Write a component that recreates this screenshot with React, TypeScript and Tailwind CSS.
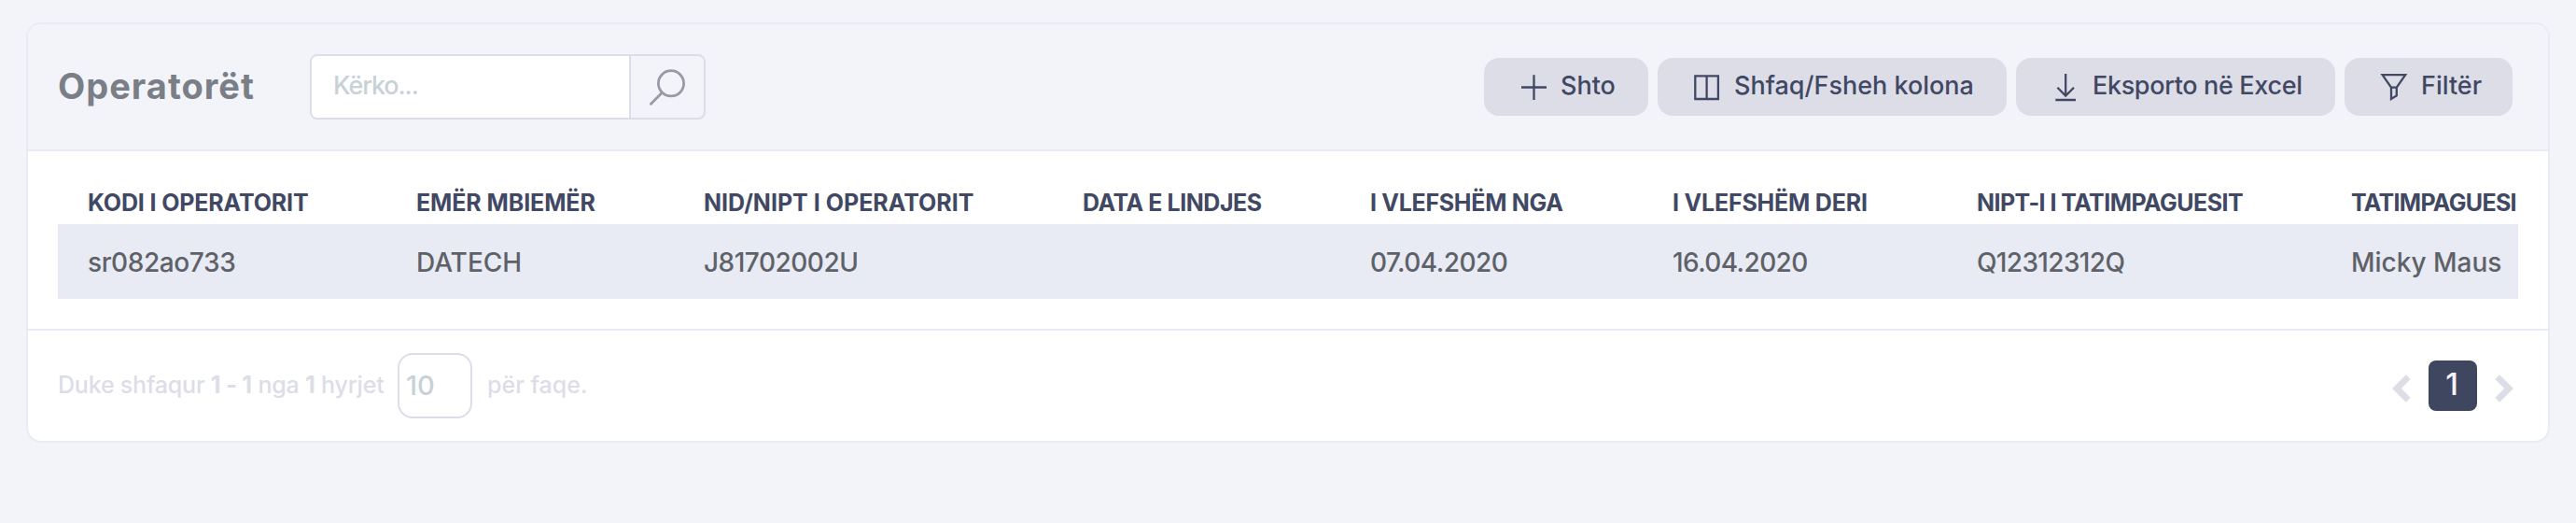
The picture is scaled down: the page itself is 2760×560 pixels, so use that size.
import type { ReactNode } from "react";

interface Column {
  title: string;
  value: string;
  width: string;
  titleTracking?: string;
  valueTracking?: string;
}

const columns: Column[] = [
  { title: "KODI I OPERATORIT", value: "sr082ao733", width: "w-[352px]", titleTracking: "tracking-[-0.15px]", valueTracking: "tracking-[-0.4px]" },
  { title: "EMËR MBIEMËR", value: "DATECH", width: "w-[308px]", titleTracking: "tracking-[-0.1px]" },
  { title: "NID/NIPT I OPERATORIT", value: "J81702002U", width: "w-[406px]", valueTracking: "tracking-[-0.5px]" },
  { title: "DATA E LINDJES", value: "", width: "w-[308px]", titleTracking: "tracking-[-0.45px]" },
  { title: "I VLEFSHËM NGA", value: "07.04.2020", width: "w-[324px]", titleTracking: "tracking-[-0.3px]", valueTracking: "tracking-[-0.5px]" },
  { title: "I VLEFSHËM DERI", value: "16.04.2020", width: "w-[326px]", titleTracking: "tracking-[-0.2px]", valueTracking: "tracking-[-0.6px]" },
  { title: "NIPT-I I TATIMPAGUESIT", value: "Q12312312Q", width: "w-[401px]", titleTracking: "tracking-[-0.55px]", valueTracking: "tracking-[-0.65px]" },
  { title: "TATIMPAGUESI", value: "Micky Maus", width: "w-[211px]", titleTracking: "tracking-[-0.7px]" },
];

function SearchIcon() {
  return (
    <svg width="40" height="40" viewBox="0 0 40 40" fill="none" stroke="#9a9aa6" strokeWidth="2.8" strokeLinecap="round">
      <circle cx="24" cy="16.3" r="13.6" />
      <path d="M14.3 26.2L2.4 38.2" />
    </svg>
  );
}

function ActionIcon({ children }: { children: ReactNode }) {
  return (
    <svg width="32" height="32" viewBox="0 0 32 32" fill="none" stroke="#414863" strokeWidth="2.3" className="shrink-0">
      {children}
    </svg>
  );
}

function ActionButton({ label, className, children }: { label: string; className: string; children: ReactNode }) {
  return (
    <button className={`flex h-[62px] items-center gap-[13px] rounded-[16px] bg-[#dddde7] pl-[37px] text-[27px] font-medium whitespace-nowrap text-[#414863] ${className}`}>
      <ActionIcon>{children}</ActionIcon>
      <span className="-mt-px">{label}</span>
    </button>
  );
}

function Header() {
  return (
    <div className="flex h-[136px] items-center rounded-t-[14px] border-b-2 border-[#e8eaf4] bg-[#f3f4f9] pr-[38px] pl-8">
      <h1 className="-mt-0.5 w-[270px] text-[38px] font-bold tracking-[1px] text-[#7a7f87]">Operatorët</h1>

      <div className="flex h-[70px] w-[424px] overflow-hidden rounded-lg border-2 border-[#dddde7]">
        <input
          type="text"
          placeholder="Kërko..."
          className="w-[340px] bg-white pb-0.5 pl-[23px] text-[27px] font-medium tracking-[-1.1px] outline-none placeholder:text-[#c7d2d6]"
        />
        <button className="flex flex-1 items-center justify-center border-l-2 border-[#dddde7]">
          <SearchIcon />
        </button>
      </div>

      <div className="ml-auto flex gap-2.5">
        <ActionButton label="Shto" className="w-[176px]">
          <path d="M3 16.5H30M16.5 3.3V30" />
        </ActionButton>
        <ActionButton label="Shfaq/Fsheh kolona" className="w-[374px]">
          <path d="M3.3 4.3H27.9V29H3.3ZM15.6 4.3V29" />
        </ActionButton>
        <ActionButton label="Eksporto në Excel" className="w-[342px] tracking-[-0.35px]">
          <path d="M16.2 2V25M7.4 16.7L16.2 25.5L25 16.7M5.3 30H27" />
        </ActionButton>
        <ActionButton label="Filtër" className="w-[180px]">
          <path d="M3.6 3.2H28.2L18.8 16.6H13L3.6 3.2ZM13 16.6V29L18.8 25.4V16.6" />
        </ActionButton>
      </div>
    </div>
  );
}

function OperatorsTable() {
  return (
    <div className="overflow-hidden px-8 py-8">
      <table className="w-[2636px] table-fixed border-collapse text-left whitespace-nowrap">
        <thead>
          <tr className="h-[46px]">
            {columns.map((col) => (
              <th key={col.title} className={`py-0 pr-0 pl-8 align-middle text-[25px] leading-[46px] font-bold text-[#414863] ${col.width} ${col.titleTracking ?? ""}`}>
                {col.title}
              </th>
            ))}
          </tr>
        </thead>
        <tbody>
          <tr className="h-20 bg-[#e8ebf4]">
            {columns.map((col) => (
              <td key={col.title} className={`pt-0.5 pr-0 pb-0 pl-8 align-middle text-[28px] font-medium text-[#5e6268] ${col.valueTracking ?? ""}`}>
                {col.value}
              </td>
            ))}
          </tr>
        </tbody>
      </table>
    </div>
  );
}

function Footer() {
  return (
    <div className="flex h-[120px] items-center justify-between border-t-2 border-[#e8eaf4] pr-[37px] pl-8">
      <div className="flex items-center text-[25px] font-medium text-[#dddde8]">
        <span className="w-[364px] tracking-[-0.2px] whitespace-nowrap">
          Duke shfaqur <b>1 - 1</b> nga <b>1</b> hyrjet
        </span>
        <input
          type="text"
          defaultValue="10"
          className="h-[70px] w-20 rounded-[16px] border-2 border-[#dddde8] bg-white pb-px pl-[7px] text-[29px] font-medium text-[#c7d2d6] outline-none"
        />
        <span className="ml-4">për faqe.</span>
      </div>

      <div className="flex items-center">
        <svg width="20" height="30" viewBox="0 0 20 30" fill="none" stroke="#dddde7" strokeWidth="7" className="mt-[5px]">
          <path d="M17.2 2.6L5 14.9L17.2 27.2" />
        </svg>
        <span className="mx-[19px] flex h-[54px] w-[52px] items-center justify-center rounded-lg bg-[#3f465f] pr-0.5 pb-0.5 text-[33px] font-medium text-[#f3f4f9]">
          1
        </span>
        <svg width="20" height="30" viewBox="0 0 20 30" fill="none" stroke="#dddde7" strokeWidth="7" className="mt-[5px]">
          <path d="M2.8 2.6L15 14.9L2.8 27.2" />
        </svg>
      </div>
    </div>
  );
}

export default function App() {
  return (
    <div className="h-[560px] w-[2760px] bg-[#f3f4f9] px-7 pt-6 font-['Inter',sans-serif]">
      <div className="h-[450px] rounded-[16px] border-2 border-[#e8eaf4] bg-white">
        <Header />
        <OperatorsTable />
        <Footer />
      </div>
    </div>
  );
}
